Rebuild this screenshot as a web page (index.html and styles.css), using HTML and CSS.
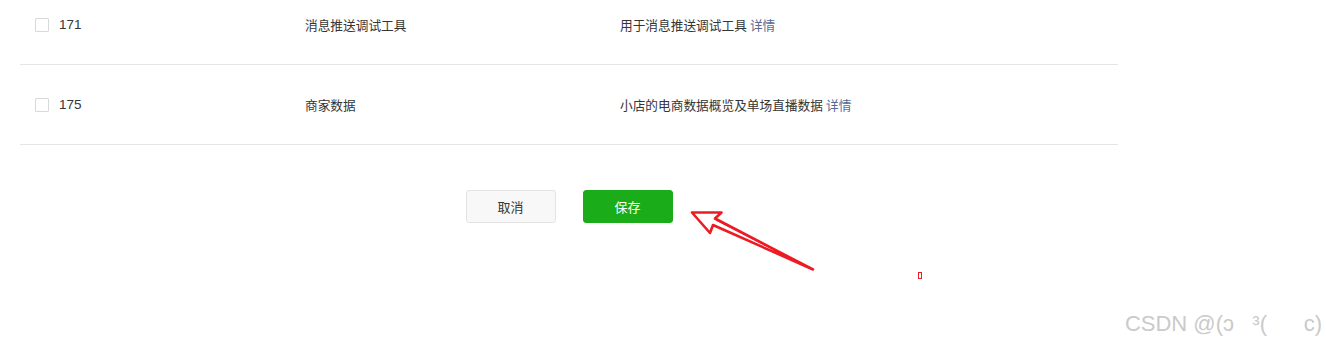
FILE: index.html
```html
<!DOCTYPE html>
<html>
<head>
    <meta charset="UTF-8">
    <title>接口权限</title>
    <link rel="stylesheet" href="styles.css">
</head>
<body>
    <!-- 权限列表 -->
    <div class="perm-list">
        <div class="perm-row">
            <div class="cell cell-id"><span class="checkbox"></span>171</div>
            <div class="cell cell-name">消息推送调试工具</div>
            <div class="cell cell-desc">用于消息推送调试工具 <a href="#" class="link">详情</a></div>
        </div>
        <div class="perm-row">
            <div class="cell cell-id"><span class="checkbox"></span>175</div>
            <div class="cell cell-name">商家数据</div>
            <div class="cell cell-desc">小店的电商数据概览及单场直播数据 <a href="#" class="link">详情</a></div>
        </div>
    </div>

    <!-- 操作按钮 -->
    <div class="actions">
        <button class="btn btn-default">取消</button>
        <button class="btn btn-primary">保存</button>
    </div>

    <!-- 标注 -->
    <svg class="mark-arrow" width="140" height="80" viewBox="680 200 140 80">
        <polygon points="692,212.5 721.5,212.5 715,218.5 813,269.5 713,225 710,233"
                 fill="none" stroke="#ec1c24" stroke-width="2.6" stroke-linejoin="round"/>
        <line x1="716" y1="220" x2="810" y2="268" stroke="#ec1c24" stroke-width="1.2"/>
    </svg>
    <span class="mark-dot"></span>

    <div class="watermark">CSDN @(ↄ&nbsp;&nbsp;&nbsp;³(&nbsp;&nbsp;&nbsp;&nbsp;&nbsp;&nbsp;c)</div>
</body>
</html>
```

FILE: styles.css
```css
/* 基本 */
body {
    margin: 0;
    padding: 0;
    background: #fff;
    font-family: "Liberation Sans", "Noto Sans CJK SC", sans-serif;
    font-size: 12.7px;
    color: #353535;
    overflow: hidden;
}

/* 权限列表 */
.perm-list {
    width: 1098px;
    margin: -15px 0 0 20px;
}

.perm-row {
    display: flex;
    align-items: center;
    height: 79px;
    border-bottom: 1px solid #e5e5e5;
}

.cell {
    display: flex;
    align-items: center;
    white-space: nowrap;
}

.cell-id {
    width: 270px;
    padding-left: 15px;
    font-size: 13.5px;
}

.cell-name {
    width: 315px;
}

.cell-desc {
    flex: 1;
}

.checkbox {
    display: inline-block;
    width: 12px;
    height: 12px;
    border: 1px solid #d9d9d9;
    border-radius: 1px;
    margin-right: 10px;
    background: #fff;
}

.link {
    color: #576b95;
    text-decoration: none;
    margin-left: 3px;
}

/* 操作按钮 */
.actions {
    width: 1098px;
    margin: 45px 0 0 20px;
    display: flex;
    justify-content: center;
    gap: 27px;
}

.btn {
    width: 90px;
    height: 33px;
    border-radius: 3px;
    font-family: inherit;
    font-size: 13px;
    padding: 0;
    cursor: pointer;
}

.btn-default {
    background: #f8f8f8;
    border: 1px solid #e4e4e4;
    color: #353535;
}

.btn-primary {
    background: #1aad19;
    border: 1px solid #1aad19;
    color: #fff;
}

/* 标注 */
.mark-arrow {
    position: absolute;
    left: 680px;
    top: 200px;
}

.mark-dot {
    position: absolute;
    left: 918px;
    top: 272px;
    width: 2px;
    height: 5px;
    border: 1.5px solid #ec1c24;
}

.watermark {
    position: absolute;
    right: 4px;
    top: 311px;
    font-size: 22px;
    color: #cacaca;
    white-space: nowrap;
}
```
